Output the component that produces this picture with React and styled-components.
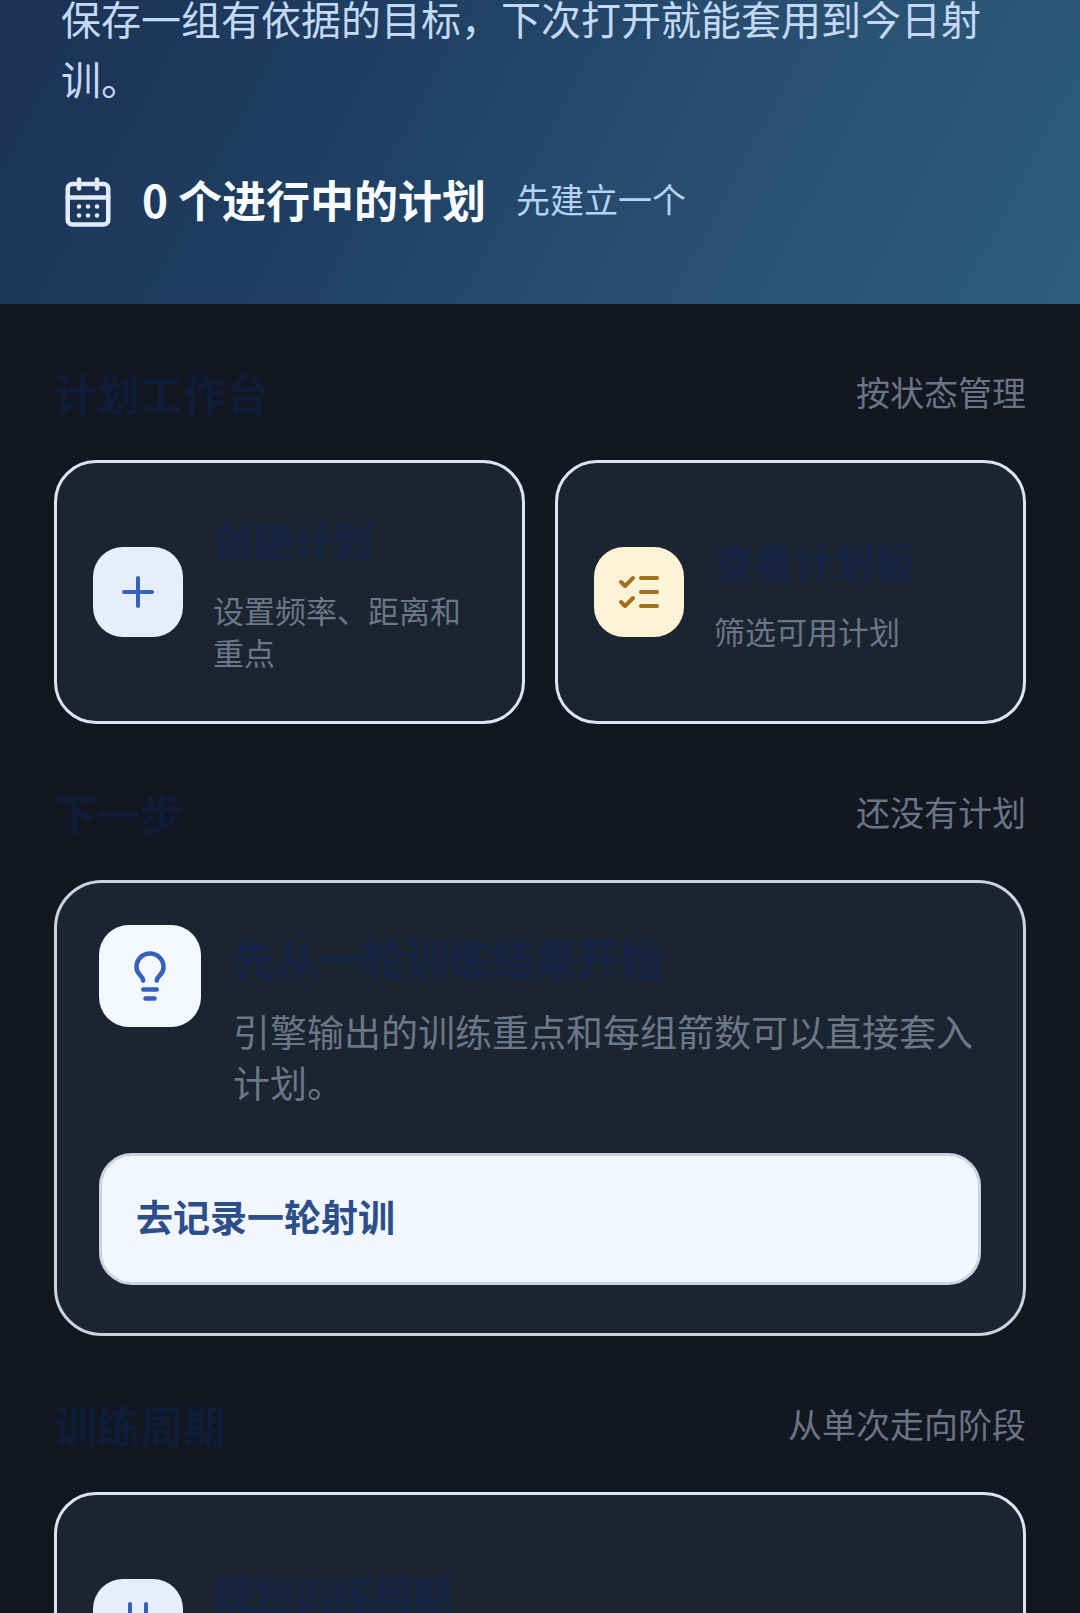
import styled, { createGlobalStyle } from "styled-components";
import { CalendarDays, Lightbulb, ListChecks, Plus } from "lucide-react";

const GlobalStyle = createGlobalStyle`
    * {
        box-sizing: border-box;
    }

    body {
        margin: 0;
        background: #121722;
        font-family: "Noto Sans CJK SC", sans-serif;
    }

    h2, h3, p {
        margin: 0;
    }
`;

const Page = styled.main`
    height: 100vh;
    overflow: hidden;
`;

const Hero = styled.header`
    margin-top: -12px;
    padding: 0 54px 69px 61px;
    background: linear-gradient(118deg, #1c3153 0%, #1f4063 36%, #294f70 65%, #2e5d7d 100%);
`;

const HeroText = styled.p`
    color: #c3d9f7;
    font-size: 40px;
    line-height: 60px;
`;

const HeroStatus = styled.div`
    display: flex;
    align-items: center;
    margin-top: 61px;
    color: #e2ebfa;
`;

const HeroCount = styled.strong`
    margin: 0 30px 0 27px;
    padding-bottom: 6px;
    color: #f8fcff;
    font-size: 44px;
    font-weight: 600;
    line-height: 60px;
`;

const HeroHint = styled.span`
    padding-bottom: 6px;
    color: #b5d3f7;
    font-size: 34px;
    line-height: 60px;
`;

const Content = styled.div`
    padding: 0 54px;
`;

const SectionHeader = styled.div`
    display: flex;
    align-items: center;
    justify-content: space-between;
    padding: 58px 0 38px;
`;

const SectionTitle = styled.h2`
    color: #101d38;
    font-size: 43px;
    font-weight: 700;
    line-height: 60px;
`;

const SectionNote = styled.span`
    color: #6b7482;
    font-size: 34px;
    line-height: 60px;
`;

const CardGrid = styled.div`
    display: grid;
    grid-template-columns: repeat(${({ $columns }) => $columns}, 1fr);
    gap: 30px;
`;

const Card = styled.button`
    display: flex;
    align-items: center;
    gap: 30px;
    min-height: 264px;
    padding: 42px 36px;
    border: 3px solid #dde5f2;
    border-radius: 42px;
    background: #1b2431;
    font-family: inherit;
    text-align: left;
    cursor: pointer;
`;

const IconBox = styled.span`
    display: flex;
    flex: none;
    align-items: center;
    justify-content: center;
    width: ${({ $size }) => $size || 90}px;
    height: ${({ $size }) => $size || 90}px;
    border-radius: 30px;
    background: ${({ $background }) => $background};
    color: ${({ $color }) => $color};
`;

const CardText = styled.span`
    display: block;
    flex: 1;
    min-height: 128px;
    padding-bottom: 4px;
`;

const CardTitle = styled.span`
    display: block;
    margin-bottom: 16px;
    color: #152445;
    font-size: 40px;
    font-weight: 700;
    line-height: 66px;
`;

const CardDescription = styled.span`
    display: block;
    color: #6b7686;
    font-size: 31px;
    line-height: 42px;
`;

const HintCard = styled.section`
    padding: 42px 42px 48px;
    border: 3px solid #cbd3e1;
    border-radius: 48px;
    background: #1b2431;
`;

const HintRow = styled.div`
    display: flex;
    gap: 32px;
`;

const HintBody = styled.div`
    flex: 1;
`;

const HintTitle = styled.h3`
    margin-bottom: 17px;
    color: #152445;
    font-size: 43px;
    font-weight: 700;
    line-height: 64px;
`;

const HintText = styled.p`
    color: #6b7686;
    font-size: 37px;
    line-height: 51px;
`;

const HintButton = styled.button`
    width: 100%;
    height: 132px;
    margin-top: 45px;
    padding: 0 34px 6px;
    border: 3px solid #cbd3e1;
    border-radius: 33px;
    background: #f2f6fd;
    color: #2c4f8a;
    font-family: inherit;
    font-size: 37px;
    font-weight: 700;
    text-align: left;
    cursor: pointer;
`;

const PeriodIcon = () => (
    <svg width="48" height="48" viewBox="0 0 24 24" fill="none" stroke="currentColor" strokeWidth="2" strokeLinecap="round" aria-hidden="true">
        <path d="M8 2v6" />
        <path d="M16 2v6" />
    </svg>
);

const Section = ({ title, note, children }) => (
    <section>
        <SectionHeader>
            <SectionTitle>{title}</SectionTitle>
            <SectionNote>{note}</SectionNote>
        </SectionHeader>
        {children}
    </section>
);

const ActionCard = ({ icon, background, color, title, description }) => (
    <Card type="button">
        <IconBox $background={background} $color={color}>{icon}</IconBox>
        <CardText>
            <CardTitle>{title}</CardTitle>
            {description && <CardDescription>{description}</CardDescription>}
        </CardText>
    </Card>
);

const App = () => {
    return (
        <>
            <GlobalStyle />
            <Page>
                <Hero>
                    <HeroText>保存一组有依据的目标，下次打开就能套用到今日射训。</HeroText>
                    <HeroStatus>
                        <CalendarDays size={54} />
                        <HeroCount>0 个进行中的计划</HeroCount>
                        <HeroHint>先建立一个</HeroHint>
                    </HeroStatus>
                </Hero>
                <Content>
                    <Section title="计划工作台" note="按状态管理">
                        <CardGrid $columns={2}>
                            <ActionCard
                                icon={<Plus size={48} />}
                                background="#e6eefb"
                                color="#3560bd"
                                title="创建计划"
                                description="设置频率、距离和重点"
                            />
                            <ActionCard
                                icon={<ListChecks size={48} />}
                                background="#fcf2d6"
                                color="#a3701c"
                                title="查看计划板"
                                description="筛选可用计划"
                            />
                        </CardGrid>
                    </Section>
                    <Section title="下一步" note="还没有计划">
                        <HintCard>
                            <HintRow>
                                <IconBox $size={102} $background="#f3f7fe" $color="#3560bd">
                                    <Lightbulb size={54} />
                                </IconBox>
                                <HintBody>
                                    <HintTitle>先从一轮训练结果开始</HintTitle>
                                    <HintText>引擎输出的训练重点和每组箭数可以直接套入计划。</HintText>
                                </HintBody>
                            </HintRow>
                            <HintButton type="button">去记录一轮射训</HintButton>
                        </HintCard>
                    </Section>
                    <Section title="训练周期" note="从单次走向阶段">
                        <CardGrid $columns={1}>
                            <ActionCard
                                icon={<PeriodIcon />}
                                background="#e6eefb"
                                color="#3560bd"
                                title="规划训练周期"
                            />
                        </CardGrid>
                    </Section>
                </Content>
            </Page>
        </>
    );
};

export default App;
